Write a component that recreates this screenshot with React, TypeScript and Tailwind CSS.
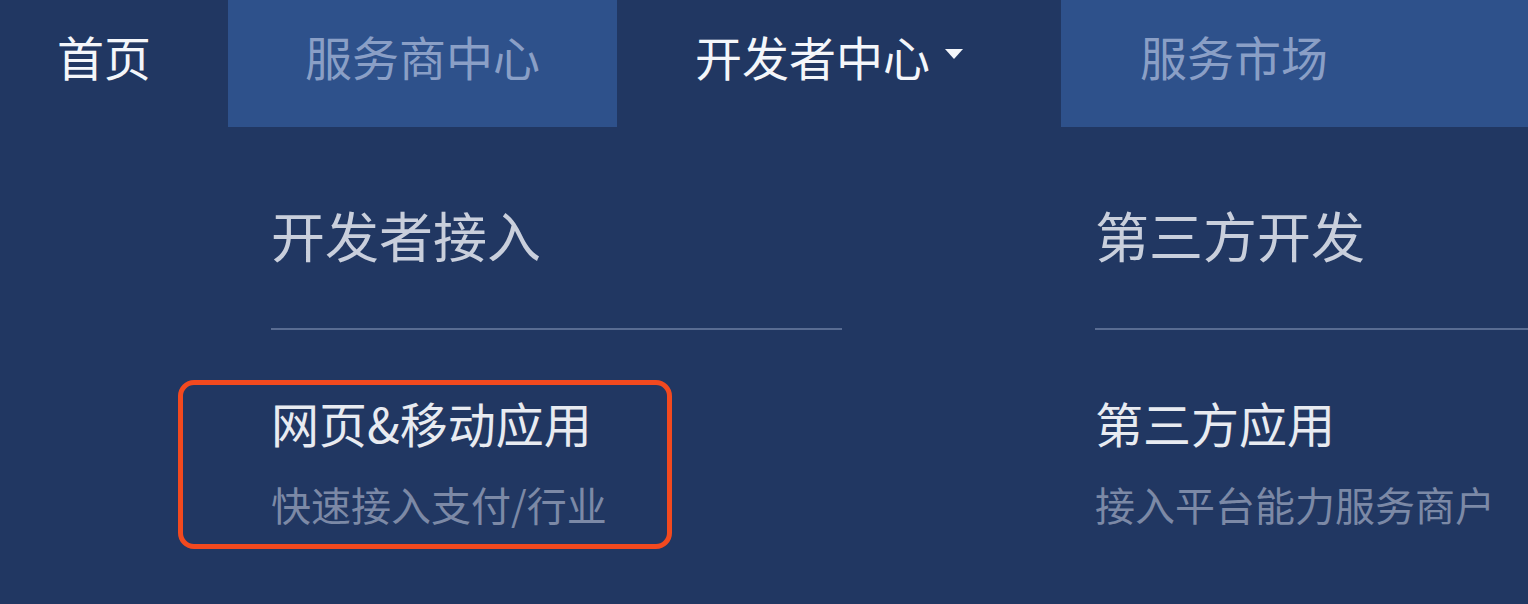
import React from 'react';

const font = { fontFamily: '"Noto Sans CJK SC", "Noto Sans", sans-serif' };

interface NavTab {
  label: string;
  width: string;
  highlight?: boolean;
  active?: boolean;
  caret?: boolean;
}

const tabs: NavTab[] = [
  { label: '首页', width: 'w-[228px] pl-[57px]', active: true },
  { label: '服务商中心', width: 'w-[389px] pl-[77px]', highlight: true },
  { label: '开发者中心', width: 'w-[444px] pl-[78px]', active: true, caret: true },
  { label: '服务市场', width: 'flex-1 pl-[79px]', highlight: true },
];

const Caret = () => (
  <svg width="20" height="12" viewBox="0 0 20 12" className="ml-[14px] mt-[-4px]">
    <path d="M1 1 H19 L10 11 Z" fill="#f4f6fa" />
  </svg>
);

const App: React.FC = () => {
  return (
    <div className="w-[1528px] h-[604px] overflow-hidden bg-[#213762]" style={font}>
      <nav className="flex h-[127px]">
        {tabs.map((tab) => (
          <div
            key={tab.label}
            className={`${tab.width} flex items-center pb-[16px] ${
              tab.highlight ? 'bg-[#2e518b]' : ''
            }`}
          >
            <span
              className={`text-[47px] leading-[56px] whitespace-nowrap ${
                tab.active ? 'text-[#f4f6fa]' : 'text-[#8a9fc6]'
              }`}
            >
              {tab.label}
            </span>
            {tab.caret && <Caret />}
          </div>
        ))}
      </nav>

      <div className="flex pl-[271px]">
        <section className="w-[571px] pt-[76px]">
          <h2 className="text-[54px] leading-[64px] text-[#c9cfdc] font-normal whitespace-nowrap">
            开发者接入
          </h2>
          <div className="mt-[61px] h-[2px] bg-[#596c92]" />
          <div className="relative mt-[64px]">
            <div className="text-[48px] leading-[56px] text-[#e8ebf1] whitespace-nowrap">
              网页&amp;移动应用
            </div>
            <div className="mt-[30px] text-[40px] leading-[48px] text-[#7c89a6] whitespace-nowrap">
              快速接入支付/行业
            </div>
            <span className="absolute left-[-93px] top-[-14px] w-[494px] h-[169px] rounded-[16px] border-[5px] border-[#f2491f] pointer-events-none" />
          </div>
        </section>

        <section className="flex-1 ml-[253px] pt-[76px]">
          <h2 className="text-[54px] leading-[64px] text-[#c9cfdc] font-normal whitespace-nowrap">
            第三方开发
          </h2>
          <div className="mt-[61px] h-[2px] bg-[#596c92]" />
          <div className="mt-[64px]">
            <div className="text-[48px] leading-[56px] text-[#e8ebf1] whitespace-nowrap">
              第三方应用
            </div>
            <div className="mt-[30px] text-[40px] leading-[48px] text-[#7c89a6] whitespace-nowrap">
              接入平台能力服务商户
            </div>
          </div>
        </section>
      </div>
    </div>
  );
};

export default App;
